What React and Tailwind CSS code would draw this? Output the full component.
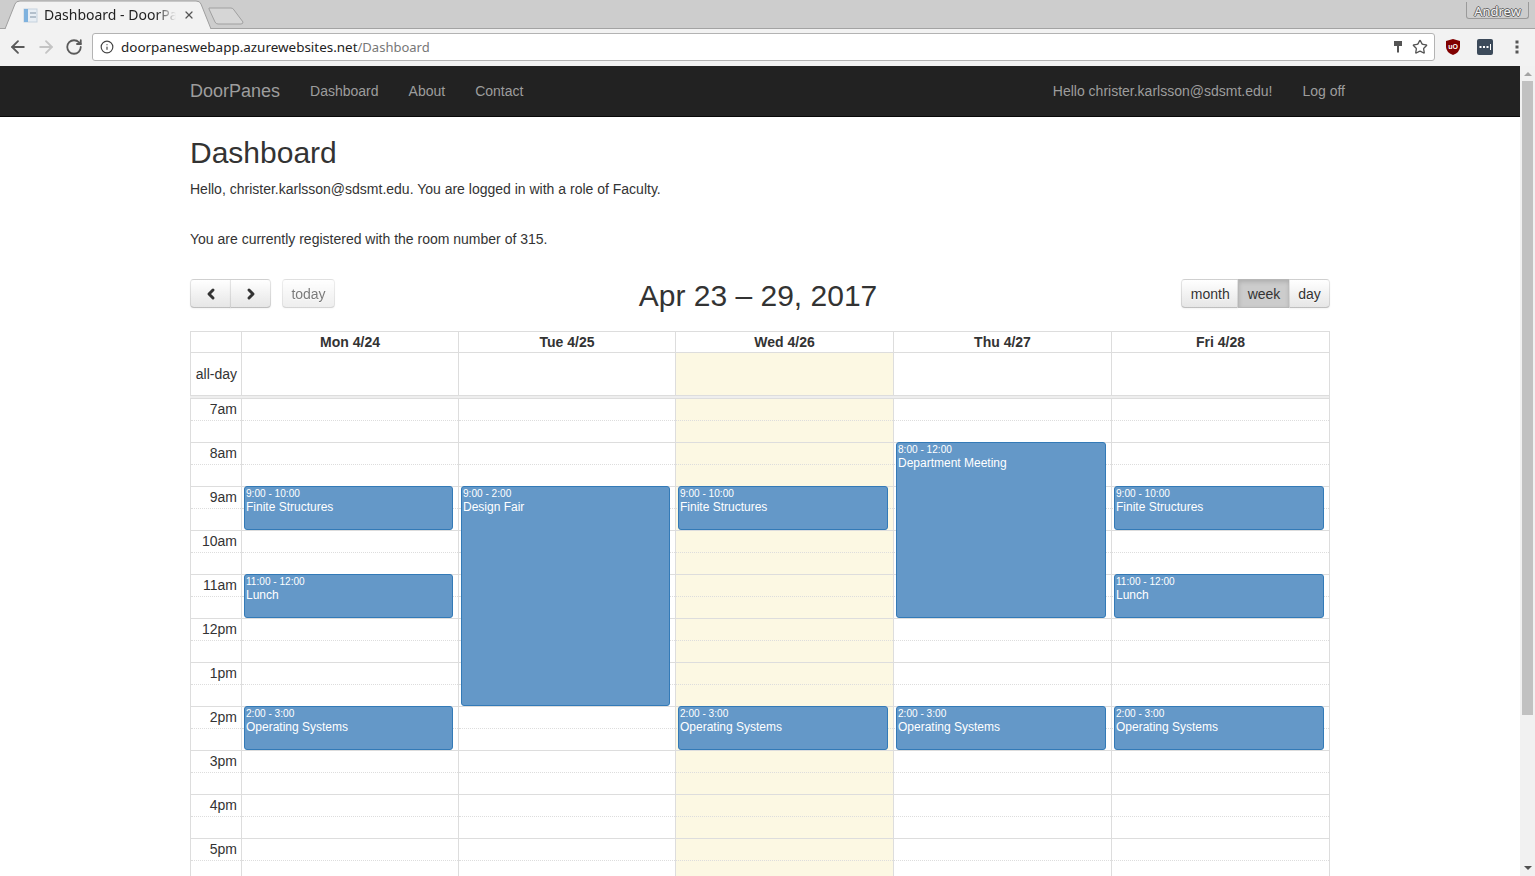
import { ArrowLeft, ArrowRight, ChevronLeft, ChevronRight, Info, RotateCw, Star, X } from "lucide-react";

const hours = ["7am", "8am", "9am", "10am", "11am", "12pm", "1pm", "2pm", "3pm", "4pm", "5pm"];

const fs = { time: "9:00 - 10:00", title: "Finite Structures", start: 9, end: 10 };
const lunch = { time: "11:00 - 12:00", title: "Lunch", start: 11, end: 12 };
const os = { time: "2:00 - 3:00", title: "Operating Systems", start: 14, end: 15 };

const days = [
  { label: "Mon 4/24", events: [fs, lunch, os] },
  { label: "Tue 4/25", events: [{ time: "9:00 - 2:00", title: "Design Fair", start: 9, end: 14 }] },
  { label: "Wed 4/26", today: true, events: [fs, os] },
  { label: "Thu 4/27", events: [{ time: "8:00 - 12:00", title: "Department Meeting", start: 8, end: 12 }, os] },
  { label: "Fri 4/28", events: [fs, lunch, os] },
];

const gridCols = "grid grid-cols-[51px_217px_217px_218px_218px_218px]";
const btn =
  "h-[29px] px-[8.4px] border border-black/10 border-b-black/25 bg-gradient-to-b from-white to-[#e6e6e6] text-[#333] text-sm shadow-[0_1px_2px_rgba(0,0,0,0.05)] [text-shadow:0_1px_1px_rgba(255,255,255,0.75)] flex items-center justify-center";

function Slots() {
  return hours.map((h) => (
    <div key={h}>
      <div className="h-[22px] border-b border-dotted border-[#ddd]" />
      <div className="h-[22px] border-b border-[#ddd]" />
    </div>
  ));
}

function Event({ ev }) {
  return (
    <div
      className="absolute left-[2px] right-[5px] rounded-[3px] border border-[#337ab7] bg-[#6498c8] px-px text-white overflow-hidden"
      style={{ top: (ev.start - 7) * 44 - 1, height: (ev.end - ev.start) * 44 }}
    >
      <div className="text-[10.1px] leading-[13px]">{ev.time}</div>
      <div className="mt-px text-xs leading-[13.5px]">{ev.title}</div>
    </div>
  );
}

function BrowserChrome() {
  return (
    <div className="h-[66px] shrink-0 font-['Noto_Sans',sans-serif]">
      {/* tab strip */}
      <div className="relative h-[29px] bg-[#cdcdcd] border-b border-[#a3a3a3]">
        <svg className="absolute left-0 top-0" width="250" height="29" viewBox="0 0 250 29">
          <path d="M5 29 L15 4 Q16 1 20 1 L196 1 Q200 1 201 4 L211 29" fill="#f2f2f2" stroke="#9e9e9e" />
          <path d="M209 8 L231 8 Q233 8 234 10 L243 22 Q243 24 241 24 L218 24 Q216 24 215 22 L209 9 Z" fill="#d6d6d6" stroke="#a0a0a0" />
        </svg>
        <svg className="absolute left-[23px] top-[8px]" width="15" height="15" viewBox="0 0 15 15">
          <rect x="1" y="1" width="13" height="13" fill="#e8eef4" stroke="#c5d2de" />
          <rect x="1" y="1" width="4" height="13" fill="#7fb2de" />
          <rect x="7" y="4" width="6" height="2" fill="#b4c0cc" />
          <rect x="7" y="8" width="6" height="2" fill="#b4c0cc" />
        </svg>
        <div className="absolute left-[44px] top-[5px] w-[132px] whitespace-nowrap text-sm leading-[20px] text-[#222] [mask-image:linear-gradient(to_right,black_85%,transparent)]">
          Dashboard - DoorPa
        </div>
        <X className="absolute left-[183px] top-[9px] text-[#555]" size={12} strokeWidth={2.5} />
        <div className="absolute left-[1466px] top-[2px] h-[17px] w-[63px] rounded-b-[3px] border border-t-0 border-[#9a9a9a] pt-px text-center text-[13px] leading-[16px] text-[#f4f4f4] [text-shadow:-1px_0_0_#666,1px_0_0_#666,0_-1px_0_#666,0_1px_0_#666]">
          Andrew
        </div>
      </div>
      {/* toolbar */}
      <div className="flex h-[37px] items-center bg-[#f2f2f2] pb-px">
        <ArrowLeft className="ml-[8px] text-[#5a5a5a]" size={20} strokeWidth={2.2} />
        <ArrowRight className="ml-[8px] text-[#c4c4c4]" size={20} strokeWidth={2.2} />
        <RotateCw className="ml-[9px] text-[#5a5a5a]" size={18} strokeWidth={2.4} />
        <div className="ml-[9px] flex h-[28px] w-[1343px] items-center rounded-[3px] border border-[#b3b3b3] bg-white pl-[7px] pr-[6px]">
          <Info className="text-[#444]" size={14} />
          <div className="ml-[7px] text-[13.45px] text-[#222]">
            doorpaneswebapp.azurewebsites.net<span className="text-[13px] text-[#777]">/Dashboard</span>
          </div>
          <svg className="ml-auto" width="10" height="14" viewBox="0 0 10 14">
            <path d="M1 1h8v5H6v6l-1 1-1-1V6H1z" fill="#555" />
          </svg>
          <Star className="ml-[9px] text-[#555]" size={16} strokeWidth={2} />
        </div>
        <svg className="ml-[10px]" width="16" height="16" viewBox="0 0 16 16">
          <path d="M8 0 L15 2 V8 Q15 13 8 16 Q1 13 1 8 V2 Z" fill="#800000" />
          <text x="8" y="10" textAnchor="middle" fontSize="7" fontWeight="700" fill="#fff" fontFamily="Liberation Sans">uO</text>
        </svg>
        <svg className="ml-[16px]" width="16" height="16" viewBox="0 0 16 16">
          <rect width="16" height="16" rx="2" fill="#3c4a5a" />
          <rect x="2.5" y="7" width="2" height="2" fill="#fff" />
          <rect x="6" y="7" width="2" height="2" fill="#fff" />
          <rect x="9.5" y="7" width="2" height="2" fill="#fff" />
          <rect x="13" y="5" width="1" height="6" fill="#fff" />
        </svg>
        <svg className="ml-[22px]" width="4" height="14" viewBox="0 0 4 14">
          <rect x="0.5" y="0.5" width="3" height="3" fill="#555" />
          <rect x="0.5" y="5.5" width="3" height="3" fill="#555" />
          <rect x="0.5" y="10.5" width="3" height="3" fill="#555" />
        </svg>
      </div>
    </div>
  );
}

function Navbar() {
  return (
    <nav className="h-[51px] shrink-0 bg-[#222] border-b border-[#080808] text-sm text-[#9d9d9d]">
      <div className="mx-auto flex h-[50px] w-[1170px] items-center pl-[15px]">
        <span className="text-lg">DoorPanes</span>
        <span className="ml-[30px]">Dashboard</span>
        <span className="ml-[30px]">About</span>
        <span className="ml-[30px]">Contact</span>
        <span className="ml-auto">Hello christer.karlsson@sdsmt.edu!</span>
        <span className="ml-[30px]">Log off</span>
      </div>
    </nav>
  );
}

function Toolbar() {
  return (
    <div className="mt-[30px] flex h-[29px] items-start">
      <button className={`${btn} w-[41px] rounded-l-[4px]`}>
        <ChevronLeft size={16} strokeWidth={4.5} />
      </button>
      <button className={`${btn} w-[41px] -ml-px rounded-r-[4px]`}>
        <ChevronRight size={16} strokeWidth={4.5} />
      </button>
      <button className={`${btn} ml-[11px] w-[53px] rounded-[4px] opacity-65`}>today</button>
      <h2 className="flex-1 text-center text-[30px] leading-[33px] text-[#333]">Apr 23 – 29, 2017</h2>
      <button className={`${btn} w-[57px] pl-[10px] rounded-l-[4px]`}>month</button>
      <button className="h-[29px] w-[52px] flex items-center justify-center border border-black/10 bg-[#ccc] text-sm text-[#333] shadow-[inset_0_2px_4px_rgba(0,0,0,0.15)]">
        week
      </button>
      <button className={`${btn} w-[41px] -ml-px rounded-r-[4px]`}>day</button>
    </div>
  );
}

function Calendar() {
  return (
    <div className="mt-[23px] border-t border-r border-[#ddd]">
      {/* day headers */}
      <div className={`${gridCols} h-[21px] border-b border-[#ddd]`}>
        <div className="border-l border-[#ddd]" />
        {days.map((d) => (
          <div key={d.label} className="border-l border-[#ddd] text-center text-sm font-bold leading-[20px] text-[#333]">
            {d.label}
          </div>
        ))}
      </div>
      {/* all-day row */}
      <div className={`${gridCols} h-[42px]`}>
        <div className="border-l border-[#ddd] pr-[4px] text-right text-sm leading-[42px] text-[#333]">all-day</div>
        {days.map((d) => (
          <div key={d.label} className={`border-l border-[#ddd] ${d.today ? "bg-[#fcf8e3]" : ""}`} />
        ))}
      </div>
      <div className="h-[4px] border-y border-[#ddd] bg-[#eee]" />
      {/* time grid */}
      <div className={gridCols}>
        <div className="border-l border-[#ddd]">
          {hours.map((h) => (
            <div key={h}>
              <div className="h-[22px] border-b border-dotted border-[#ddd] pr-[4px] text-right text-sm leading-[20px] text-[#333]">{h}</div>
              <div className="h-[22px] border-b border-[#ddd]" />
            </div>
          ))}
        </div>
        {days.map((d) => (
          <div key={d.label} className={`relative border-l border-[#ddd] ${d.today ? "bg-[#fcf8e3]" : ""}`}>
            <Slots />
            {d.events.map((ev) => (
              <Event key={ev.title} ev={ev} />
            ))}
          </div>
        ))}
      </div>
    </div>
  );
}

function Scrollbar() {
  return (
    <div className="flex w-[15px] shrink-0 flex-col items-center bg-[#f1f1f1]">
      <div className="mt-[6px] h-0 w-0 border-x-[4px] border-b-[4px] border-x-transparent border-b-[#a3a3a3]" />
      <div className="mt-[5px] h-[634px] w-[11px] bg-[#c1c1c1]" />
      <div className="mt-auto mb-[6px] h-0 w-0 border-x-[4px] border-t-[4px] border-x-transparent border-t-[#505050]" />
    </div>
  );
}

export default function App() {
  return (
    <div className="flex h-[876px] flex-col overflow-hidden bg-white font-['Liberation_Sans',Arial,sans-serif]">
      <BrowserChrome />
      <div className="flex min-h-0 flex-1">
        <div className="min-w-0 flex-1 overflow-hidden">
          <Navbar />
          <div className="mx-auto w-[1170px] px-[15px] text-sm text-[#333]">
            <h2 className="mt-[19px] text-[30px] leading-[33px]">Dashboard</h2>
            <p className="mt-[10px] leading-[20px]">Hello, christer.karlsson@sdsmt.edu. You are logged in with a role of Faculty.</p>
            <p className="mt-[30px] leading-[20px]">You are currently registered with the room number of 315.</p>
            <Toolbar />
            <Calendar />
          </div>
        </div>
        <Scrollbar />
      </div>
    </div>
  );
}
